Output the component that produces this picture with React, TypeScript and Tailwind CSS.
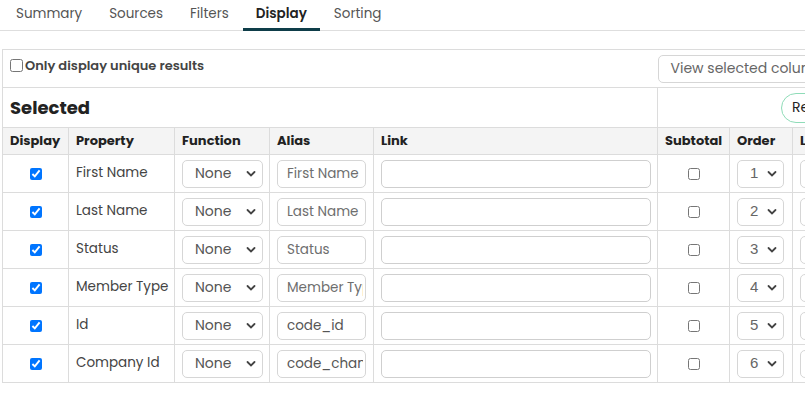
import React from "react";

type Row = {
  property: string;
  alias: string;
  isValue: boolean;
};

const rows: Row[] = [
  { property: "First Name", alias: "First Name", isValue: false },
  { property: "Last Name", alias: "Last Name", isValue: false },
  { property: "Status", alias: "Status", isValue: false },
  { property: "Member Type", alias: "Member Type", isValue: false },
  { property: "Id", alias: "code_id", isValue: true },
  { property: "Company Id", alias: "code_change_id", isValue: true },
];

const tabs = ["Summary", "Sources", "Filters", "Display", "Sorting"];

const Chevron = () => (
  <svg
    width="10"
    height="7"
    viewBox="0 0 10 7"
    className="pointer-events-none absolute top-1/2 -translate-y-1/2 right-[7px]"
  >
    <path d="M1.5 1.5 L5 5 L8.5 1.5" fill="none" stroke="#444" strokeWidth="1.8" strokeLinecap="round" />
  </svg>
);

const FakeSelect = ({ value, width, mono }: { value: string; width: string; mono?: boolean }) => (
  <div className={`relative ${width}`}>
    <select
      defaultValue={value}
      className={`appearance-none w-full h-[28px] rounded-[5px] border border-[#d6d6d6] bg-white pl-[12px] outline-none ${
        mono ? "font-['Liberation_Sans',sans-serif] text-[15px] text-[#666]" : "text-[14px] text-[#555]"
      }`}
    >
      <option>{value}</option>
    </select>
    <Chevron />
  </div>
);

const App = () => {
  const th = "border border-[#dcdcdc] bg-[#f4f4f4] px-[7px] h-[27px] text-left text-[13px] font-bold text-[#222]";
  const td = "border border-[#dcdcdc] px-[7px] h-[38px]";

  return (
    <div className="w-[805px] h-[397px] overflow-hidden bg-white font-['Poppins','Open_Sans',sans-serif]">
      <div className="flex border-b border-[#dedede] pl-[3px] h-[31px]">
        {tabs.map((t) => (
          <div
            key={t}
            className={`px-[13px] mr-[1px] flex items-center text-[13.5px] border-b-[3px] -mb-[1px] ${
              t === "Display"
                ? "border-[#0e3d49] text-[#222] font-semibold"
                : "border-transparent text-[#555]"
            }`}
          >
            {t}
          </div>
        ))}
      </div>

      <div className="pl-[2px] pt-[18px]">
        <table className="table-fixed border-collapse w-[1040px]">
          <colgroup>
            <col className="w-[66px]" />
            <col className="w-[106px]" />
            <col className="w-[95px]" />
            <col className="w-[104px]" />
            <col className="w-[284px]" />
            <col className="w-[72px]" />
            <col className="w-[63px]" />
            <col className="w-[250px]" />
          </colgroup>
          <tbody>
            <tr>
              <td colSpan={5} className="border border-r-0 border-[#dcdcdc] h-[38px] px-[7px] align-top pt-[6px]">
                <label className="flex items-center gap-[2px] text-[13px] font-semibold text-[#444]">
                  <input type="checkbox" className="w-[13px] h-[13px] m-0" />
                  Only display unique results
                </label>
              </td>
              <td colSpan={3} className="border border-l-0 border-[#dcdcdc] h-[38px] pl-0">
                <button className="h-[28px] w-[200px] text-left rounded-[5px] border border-[#d6d6d6] px-[12px] text-[14px] text-[#666] whitespace-nowrap">
                  View selected columns
                </button>
              </td>
            </tr>
            <tr>
              <td colSpan={5} className="border border-[#dcdcdc] h-[40px] px-[7px]">
                <h2 className="text-[18px] font-bold text-[#222]">Selected</h2>
              </td>
              <td colSpan={3} className="border border-[#dcdcdc] h-[40px] pl-[123px]">
                <button className="h-[30px] rounded-full border border-[#8fdcb8] px-[10px] text-[14px] text-[#222] whitespace-nowrap">
                  Remove all
                </button>
              </td>
            </tr>
            <tr>
              <th className={th}>Display</th>
              <th className={th}>Property</th>
              <th className={th}>Function</th>
              <th className={th}>Alias</th>
              <th className={th}>Link</th>
              <th className={th}>Subtotal</th>
              <th className={th}>Order</th>
              <th className={th}>Label</th>
            </tr>
            {rows.map((r, i) => (
              <tr key={r.property}>
                <td className={`${td} text-center`}>
                  <input type="checkbox" defaultChecked className="w-[12px] h-[12px] m-0 align-middle" />
                </td>
                <td className={`${td} text-[13.5px] text-[#444] whitespace-nowrap`}>{r.property}</td>
                <td className={td}>
                  <FakeSelect value="None" width="w-[81px]" />
                </td>
                <td className={td}>
                  <input
                    type="text"
                    {...(r.isValue ? { defaultValue: r.alias } : { placeholder: r.alias })}
                    className="w-[89px] h-[28px] rounded-[5px] border border-[#d6d6d6] pl-[9px] pr-[2px] text-[13.5px] text-[#555] placeholder:text-[#6e6e6e] outline-none"
                  />
                </td>
                <td className={td}>
                  <input
                    type="text"
                    className="w-[270px] h-[28px] rounded-[5px] border border-[#cfcfcf] outline-none"
                  />
                </td>
                <td className={`${td} text-center`}>
                  <input type="checkbox" className="w-[12px] h-[12px] m-0 align-middle" />
                </td>
                <td className={td}>
                  <FakeSelect value={String(i + 1)} width="w-[47px]" mono />
                </td>
                <td className={td}>
                  <input
                    type="text"
                    className="w-[200px] h-[28px] rounded-[5px] border border-[#d6d6d6] outline-none"
                  />
                </td>
              </tr>
            ))}
          </tbody>
        </table>
      </div>
    </div>
  );
};

export default App;
